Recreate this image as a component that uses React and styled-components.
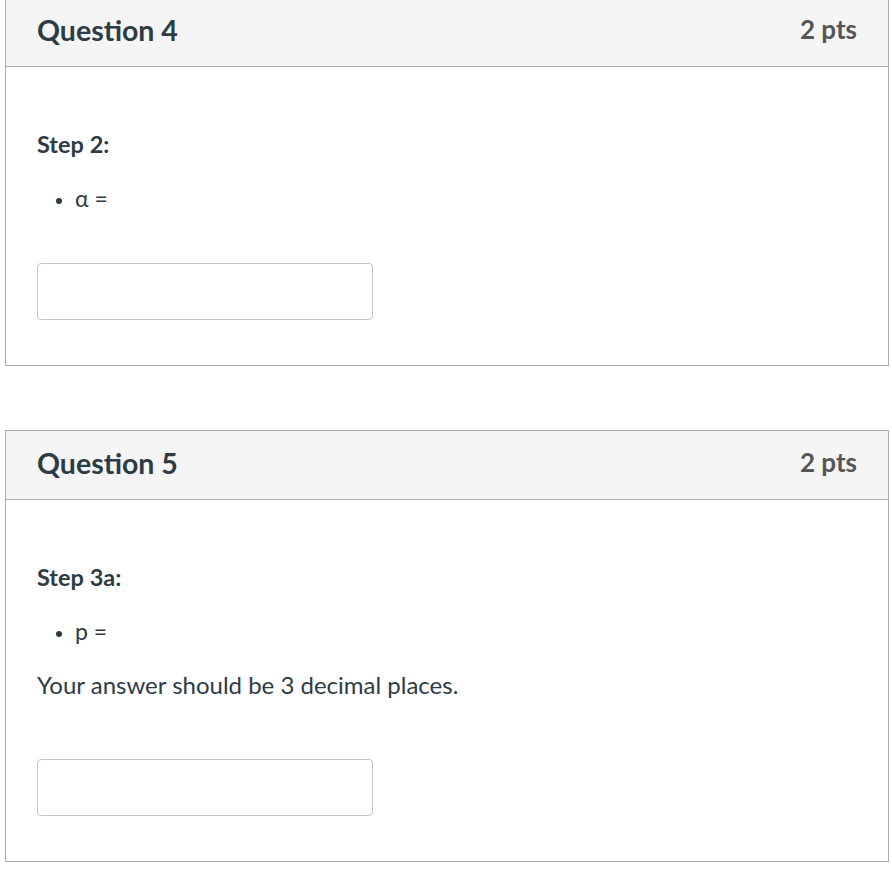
import styled, { createGlobalStyle } from "styled-components";

const GlobalStyle = createGlobalStyle`
  html, body {
    margin: 0;
    padding: 0;
    background: #ffffff;
  }
  body {
    font-family: Lato, "Liberation Sans", sans-serif;
    color: #2d3b45;
  }
`;

const questions = [
  {
    name: "Question 4",
    points: "2 pts",
    step: "Step 2:",
    item: "α =",
  },
  {
    name: "Question 5",
    points: "2 pts",
    step: "Step 3a:",
    item: "p =",
    note: "Your answer should be 3 decimal places.",
  },
];

const App = () => {
  return (
    <Page>
      <GlobalStyle />
      {questions.map((q) => (
        <QuestionCard key={q.name}>
          <QuestionHeader>
            <QuestionName>{q.name}</QuestionName>
            <QuestionPoints>{q.points}</QuestionPoints>
          </QuestionHeader>
          <QuestionBody>
            <StepText>{q.step}</StepText>
            <BulletList $last={!q.note}>
              <BulletItem>{q.item}</BulletItem>
            </BulletList>
            {q.note && <NoteText>{q.note}</NoteText>}
            <AnswerInput type="text" aria-label={q.name + " answer"} />
          </QuestionBody>
        </QuestionCard>
      ))}
    </Page>
  );
};

const Page = styled.div`
  display: flex;
  flex-direction: column;
  gap: 64px;
  padding: 0 3px 0 5px;
  margin-top: -3px;
`;

const QuestionCard = styled.div`
  border: 1px solid #acacac;
  background: #ffffff;
`;

const QuestionHeader = styled.div`
  box-sizing: border-box;
  display: flex;
  justify-content: space-between;
  align-items: center;
  height: 69px;
  padding: 0 31px 4px;
  background: #f5f5f5;
  border-bottom: 1px solid #acacac;
  line-height: 1.2;
`;

const QuestionName = styled.h2`
  margin: 0;
  font-size: 28.5px;
  font-weight: 700;
  color: #2d3b45;
`;

const QuestionPoints = styled.span`
  font-size: 26px;
  font-weight: 700;
  color: #555555;
`;

const QuestionBody = styled.div`
  display: flex;
  flex-direction: column;
  align-items: flex-start;
  padding: 62px 31px 45px;
`;

const StepText = styled.p`
  margin: 0 0 24px;
  font-size: 23.5px;
  font-weight: 700;
  line-height: 30px;
`;

const BulletList = styled.ul`
  margin: 0 0 ${(p) => (p.$last ? "50px" : "24px")};
  padding-left: 38px;
  font-size: 23px;
  line-height: 30px;
`;

const BulletItem = styled.li`
  &::marker {
    font-size: 19px;
  }
`;

const NoteText = styled.p`
  margin: 0 0 59px;
  font-size: 24px;
  line-height: 30px;
`;

const AnswerInput = styled.input`
  box-sizing: border-box;
  width: 336px;
  height: 57px;
  border: 1px solid #c5c5c5;
  border-radius: 4px;
  background: #ffffff;
  font-family: inherit;
  font-size: 22px;
  padding: 0 12px;
`;

export default App;
